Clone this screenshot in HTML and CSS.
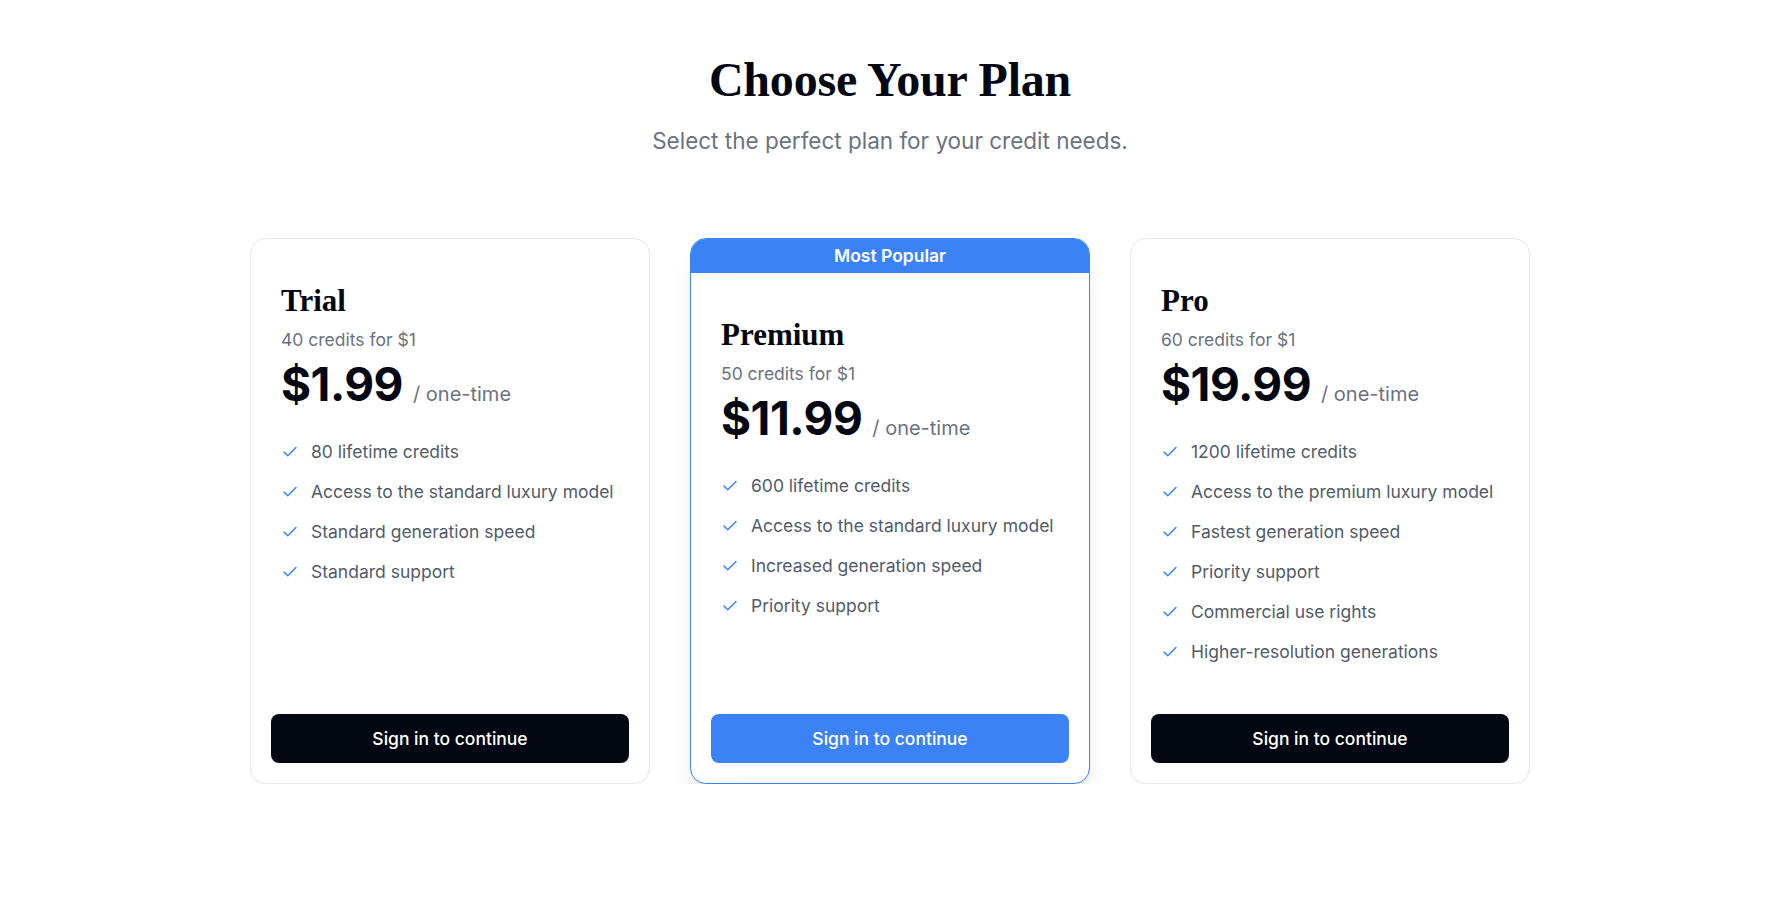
FILE: index.html
```html
<!DOCTYPE html>
<html lang="en">
    <head>
        <meta charset="UTF-8"/>
        <meta name="viewport" content="width=device-width, initial-scale=1.0"/>
        <title>Choose Your Plan</title>
        <link rel="stylesheet" href="styles.css">
    </head>
    <body>
        <div class="page">
            <div class="intro">
                <h1 class="intro-title">Choose Your Plan</h1>
                <p class="intro-text">Select the perfect plan for your credit needs.</p>
            </div>

            <div class="plans">
                <!-- trial -->
                <div class="plan">
                    <div class="plan-body">
                        <h2 class="plan-name">Trial</h2>
                        <p class="plan-rate">40 credits for $1</p>
                        <div class="plan-price"><span class="amount">$1.99</span><span class="period">/ one-time</span></div>
                        <ul class="features">
                            <li><svg viewBox="0 0 24 24"><path d="M20 6 9 17l-5-5"/></svg>80 lifetime credits</li>
                            <li><svg viewBox="0 0 24 24"><path d="M20 6 9 17l-5-5"/></svg>Access to the standard luxury model</li>
                            <li><svg viewBox="0 0 24 24"><path d="M20 6 9 17l-5-5"/></svg>Standard generation speed</li>
                            <li><svg viewBox="0 0 24 24"><path d="M20 6 9 17l-5-5"/></svg>Standard support</li>
                        </ul>
                    </div>
                    <button class="btn">Sign in to continue</button>
                </div>

                <!-- premium -->
                <div class="plan plan-popular">
                    <div class="badge">Most Popular</div>
                    <div class="plan-body">
                        <h2 class="plan-name">Premium</h2>
                        <p class="plan-rate">50 credits for $1</p>
                        <div class="plan-price"><span class="amount">$11.99</span><span class="period">/ one-time</span></div>
                        <ul class="features">
                            <li><svg viewBox="0 0 24 24"><path d="M20 6 9 17l-5-5"/></svg>600 lifetime credits</li>
                            <li><svg viewBox="0 0 24 24"><path d="M20 6 9 17l-5-5"/></svg>Access to the standard luxury model</li>
                            <li><svg viewBox="0 0 24 24"><path d="M20 6 9 17l-5-5"/></svg>Increased generation speed</li>
                            <li><svg viewBox="0 0 24 24"><path d="M20 6 9 17l-5-5"/></svg>Priority support</li>
                        </ul>
                    </div>
                    <button class="btn btn-blue">Sign in to continue</button>
                </div>

                <!-- pro -->
                <div class="plan">
                    <div class="plan-body">
                        <h2 class="plan-name">Pro</h2>
                        <p class="plan-rate">60 credits for $1</p>
                        <div class="plan-price"><span class="amount">$19.99</span><span class="period">/ one-time</span></div>
                        <ul class="features">
                            <li><svg viewBox="0 0 24 24"><path d="M20 6 9 17l-5-5"/></svg>1200 lifetime credits</li>
                            <li><svg viewBox="0 0 24 24"><path d="M20 6 9 17l-5-5"/></svg>Access to the premium luxury model</li>
                            <li><svg viewBox="0 0 24 24"><path d="M20 6 9 17l-5-5"/></svg>Fastest generation speed</li>
                            <li><svg viewBox="0 0 24 24"><path d="M20 6 9 17l-5-5"/></svg>Priority support</li>
                            <li><svg viewBox="0 0 24 24"><path d="M20 6 9 17l-5-5"/></svg>Commercial use rights</li>
                            <li><svg viewBox="0 0 24 24"><path d="M20 6 9 17l-5-5"/></svg>Higher-resolution generations</li>
                        </ul>
                    </div>
                    <button class="btn">Sign in to continue</button>
                </div>
            </div>
        </div>
    </body>
</html>
```

FILE: styles.css
```css
*{margin: 0; padding: 0; box-sizing: border-box}
body{font-family: Inter, "Liberation Sans", sans-serif; color: #030712; background: #fff; padding-right: 7px;}

.page{width: 1280px; margin: 0 auto; padding-top: 56px;}

.intro{text-align: center;}
.intro-title{font-family: "Liberation Serif", serif; font-weight: 700; font-size: 48px; line-height: 48px; letter-spacing: -0.2px;}
.intro-text{margin-top: 21px; font-size: 22.5px; line-height: 32px; color: #6b7280;}

.plans{display: grid; grid-template-columns: repeat(3, 1fr); gap: 40px; margin-top: 81px;}

.plan{display: flex; flex-direction: column; border: 1px solid #e5e7eb; border-radius: 16px; padding: 20px; background: #fff; box-shadow: 0 1px 2px rgba(0,0,0,0.04);}
.plan-popular{border-color: #3b82f6; padding-top: 0; overflow: hidden; box-shadow: 0 20px 25px -5px rgba(0,0,0,0.1), 0 8px 10px -6px rgba(0,0,0,0.1);}
.badge{margin: 0 -20px 20px; height: 34px; line-height: 34px; text-align: center; background: #3b82f6; color: #fff; font-size: 17.5px; font-weight: 600;}

.plan-body{flex: 1; padding: 24px 10px 48px;}
.plan-name{font-family: "Liberation Serif", serif; font-weight: 700; font-size: 31px; line-height: 36px;}
.plan-rate{margin-top: 9px; font-size: 17.5px; line-height: 24px; color: #6b7280;}
.plan-price{display: flex; align-items: baseline; margin-top: 8px;}
.plan-price .amount{font-size: 46px; line-height: 48px; font-weight: 700; letter-spacing: -0.5px;}
.plan-price .period{margin-left: 10px; font-size: 20px; line-height: 28px; color: #6b7280;}

.features{list-style: none; margin-top: 30px; display: flex; flex-direction: column; gap: 12px;}
.features li{display: flex; align-items: center; gap: 12px; font-size: 17.5px; line-height: 28px; color: #525b69;}
.features svg{width: 18px; height: 18px; flex: none; fill: none; stroke: #3b82f6; stroke-width: 2; stroke-linecap: round; stroke-linejoin: round;}

.btn{display: block; width: 100%; height: 49px; border: 0; border-radius: 8px; background: #030712; color: #fff; font-family: inherit; font-size: 17.5px; font-weight: 500; cursor: pointer;}
.btn-blue{background: #3b82f6;}
```
